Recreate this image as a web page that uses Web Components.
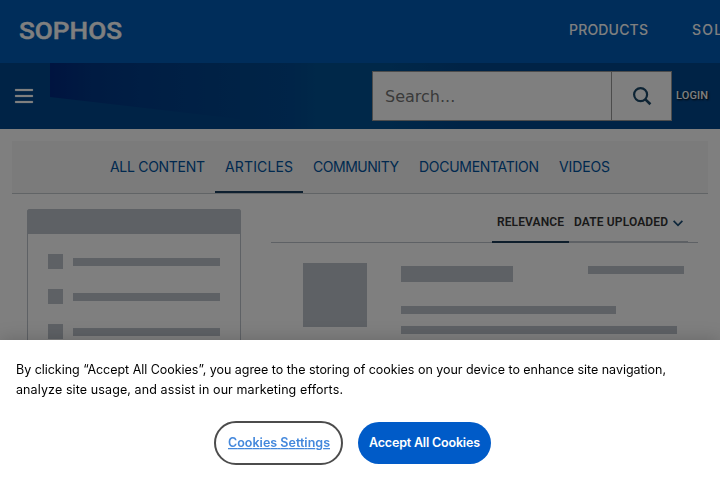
<!DOCTYPE html>
<html lang="en">
<head>
<meta charset="utf-8">
<title>Sophos Support</title>
<style>
html,body{margin:0;height:100%;overflow:hidden;background:#fff}
body{font-family:Inter,"Liberation Sans",sans-serif}
</style>
</head>
<body>
<support-page></support-page>
<script>
function define(name, html, ready) {
  customElements.define(name, class extends HTMLElement {
    connectedCallback() {
      if (this.shadowRoot) return;
      const t = document.createElement('template');
      t.innerHTML = html;
      this.attachShadow({mode: 'open'}).append(t.content.cloneNode(true));
      if (ready) ready(this);
    }
  });
}

// Tracks its text so that a line takes the given measure.
define('tracked-text', '<style>:host{display:inline-block;white-space:nowrap}span{display:inline-block}</style><span><slot></slot></span>', el => {
  const s = el.shadowRoot.querySelector('span'), w = +el.getAttribute('measure');
  el.style.width = w + 'px';
  s.style.letterSpacing = (w - s.getBoundingClientRect().width) / (el.textContent.length - 1) + 'px';
});

define('brand-bar', `<style>
:host{display:flex;box-sizing:border-box;height:63px;background:#005ab4;color:#fff;overflow:hidden;align-items:center}
svg{display:block;margin:-2px 0 0 19px;flex:none;overflow:visible}
nav{display:flex;gap:44px;margin-left:446px;font:500 14px/20px Inter,sans-serif;margin-top:-3px}
</style>
<svg width="104" height="28" viewBox="0 0 104 28" role="img"><text x="0" y="22.4" textLength="103" lengthAdjust="spacingAndGlyphs" fill="#fff" stroke="#fff" stroke-width=".4" font-family="Roboto, sans-serif" font-weight="500" font-size="23.4">SOPHOS</text></svg>
<nav><tracked-text measure="79">PRODUCTS</tracked-text><tracked-text measure="91">SOLUTIONS</tracked-text></nav>`);

define('search-box', `<style>
:host{display:flex;box-sizing:border-box;width:300px;height:50px;border:1px solid #999;background:#fff}
.q{flex:1;padding-left:12px;font:16px/49px "DejaVu Sans",sans-serif;color:#757575}
.go{width:59px;border-left:1px solid #999;display:grid;place-items:center}
svg{display:block}
</style><div class="q">Search...</div><div class="go"><svg width="20" height="20" viewBox="0 0 20 20" fill="none" stroke="#1c4969" stroke-width="2.2"><circle cx="8.6" cy="8.6" r="6.5"/><path d="M13.1 13.1L18.4 18.2" stroke-width="2.7"/></svg></div>`);

define('tool-bar', `<style>
:host{display:flex;box-sizing:border-box;height:66px;position:relative;align-items:center;padding-left:15px;
background:linear-gradient(90deg,#00468c 0 240px,#004890 290px,#005092 315px,#005092 390px,#00468c 470px)}
.art{position:absolute;left:50px;top:0;width:190px;height:66px;background:linear-gradient(90deg,#002880,#003684 42px,#003c88 90px,#00458c 190px);clip-path:polygon(0 0,100% 0,100% 56px,0 34px)}
.menu{display:grid;gap:4px;width:18px}
.menu i{height:2px;background:#fff;border-radius:1px;box-shadow:0 0 1px #fff}
search-box{margin-left:339px}
.login{margin-left:4px;font:500 11px/16px Roboto,sans-serif;color:#fff;text-shadow:1px 1px 2px #000}
</style><div class="art"></div><div class="menu"><i></i><i></i><i></i></div><search-box></search-box><tracked-text class="login" measure="32">LOGIN</tracked-text>`);

define('content-tab', `<style>
:host{display:block;box-sizing:border-box;height:52px;padding:16px 10px 0;font:14px/20px Inter,sans-serif;color:#00539f;border-bottom:2px solid transparent}
:host([active]){border-color:#1c4060}
</style><slot></slot>`);

define('content-tabs', `<style>
:host{display:flex;box-sizing:border-box;margin:12px 12px 0;height:53px;background:#f6f6f6;border-bottom:1px solid #c3c8cc;justify-content:center}
</style>
<content-tab><tracked-text measure="95">ALL CONTENT</tracked-text></content-tab><content-tab active><tracked-text measure="68">ARTICLES</tracked-text></content-tab><content-tab><tracked-text measure="86">COMMUNITY</tracked-text></content-tab><content-tab><tracked-text measure="120">DOCUMENTATION</tracked-text></content-tab><content-tab><tracked-text measure="51">VIDEOS</tracked-text></content-tab>`);

define('facet-skeleton', `<style>
:host{display:block;box-sizing:border-box;width:214px;height:180px;border:1px solid #bcc3ca;border-radius:2px}
.head{height:24px;background:#bcc3ca}
.rows{padding:20px 20px 0;display:grid;gap:20px}
.row{display:flex;height:15px;gap:10px;align-items:flex-start}
.row i{width:15px;height:15px;background:#bcc3ca}
.row b{flex:1;height:8px;margin-top:4px;background:#bcc3ca}
</style><div class="head"></div><div class="rows"><div class="row"><i></i><b></b></div><div class="row"><i></i><b></b></div><div class="row"><i></i><b></b></div></div>`);

define('sort-bar', `<style>
:host{display:flex;box-sizing:border-box;height:34px;border-bottom:1px solid #bcc3ca;justify-content:flex-end;padding-right:10px;font:600 12px/16px Roboto,sans-serif;color:#333}
div{box-sizing:border-box;height:34px;padding:5px 5px 0;border-bottom:2px solid #bcc3ca;display:flex}
.on{border-color:#1c3c58}
.date{width:119px}
svg{margin:6px 0 0 5px}
</style><div class="on"><tracked-text measure="67">RELEVANCE</tracked-text></div><div class="date"><tracked-text measure="94">DATE UPLOADED</tracked-text><svg width="10" height="7" viewBox="0 0 10 7" fill="none" stroke="#1d4f76" stroke-width="1.8"><path d="M.6.8L5 5.3L9.4.8"/></svg></div>`);

define('result-skeleton', `<style>
:host{display:flex;padding:20px 14px 0 32px}
i{display:block;background:#bcc3ca}
.thumb{width:64px;height:64px;margin-right:34px;flex:none}
.body{width:283px;padding-top:3px}
.top{display:flex;justify-content:space-between}
.title{width:112px;height:16px}.when{width:96px;height:8px}
.l1{width:215px;height:8px;margin-top:24px}.l2{width:276px;height:8px;margin-top:12px}
</style><i class="thumb"></i><div class="body"><div class="top"><i class="title"></i><i class="when"></i></div><i class="l1"></i><i class="l2"></i></div>`);

define('cookie-banner', `<style>
:host{display:block;box-sizing:border-box;position:fixed;left:0;right:0;bottom:0;height:140px;background:#fff;box-shadow:0 0 18px rgba(0,0,0,.2);padding:20px 16px 0;color:#000;font:12.5px/20px Inter,sans-serif}
.copy{display:grid}
.actions{display:flex;gap:15px;align-items:center;margin:21px 0 0 198px}
.btn{box-sizing:border-box;display:grid;place-items:center;font-weight:600}
.settings{width:129px;height:44px;border:2px solid #4c4c4c;border-radius:22px}
.accept{width:133px;height:42px;border-radius:21px;background:#005bc8;color:#fff}
.settings svg{display:block;overflow:visible}
</style>
<div class="copy"><tracked-text measure="650">By clicking “Accept All Cookies”, you agree to the storing of cookies on your device to enhance site navigation,</tracked-text>
<tracked-text measure="327">analyze site usage, and assist in our marketing efforts.</tracked-text></div>
<div class="actions"><div class="btn settings"><svg width="102" height="20"><text x="0" y="14" textLength="102" lengthAdjust="spacing" fill="#4488dc" text-decoration="underline">Cookies Settings</text></svg></div><div class="btn accept"><tracked-text measure="111">Accept All Cookies</tracked-text></div></div>`);

define('support-page', `<style>
:host{display:block;height:480px;overflow:hidden;font-family:Inter,sans-serif}
.cols{display:grid;grid-template-columns:214px 427px;column-gap:30px;padding:15px 0 0 27px}
.shade{position:fixed;inset:0;background:rgba(0,0,0,.5)}
</style><brand-bar></brand-bar><tool-bar></tool-bar><content-tabs></content-tabs>
<div class="cols"><facet-skeleton></facet-skeleton><main><sort-bar></sort-bar><result-skeleton></result-skeleton></main></div>
<div class="shade"></div><cookie-banner></cookie-banner>`);
</script>
</body>
</html>
